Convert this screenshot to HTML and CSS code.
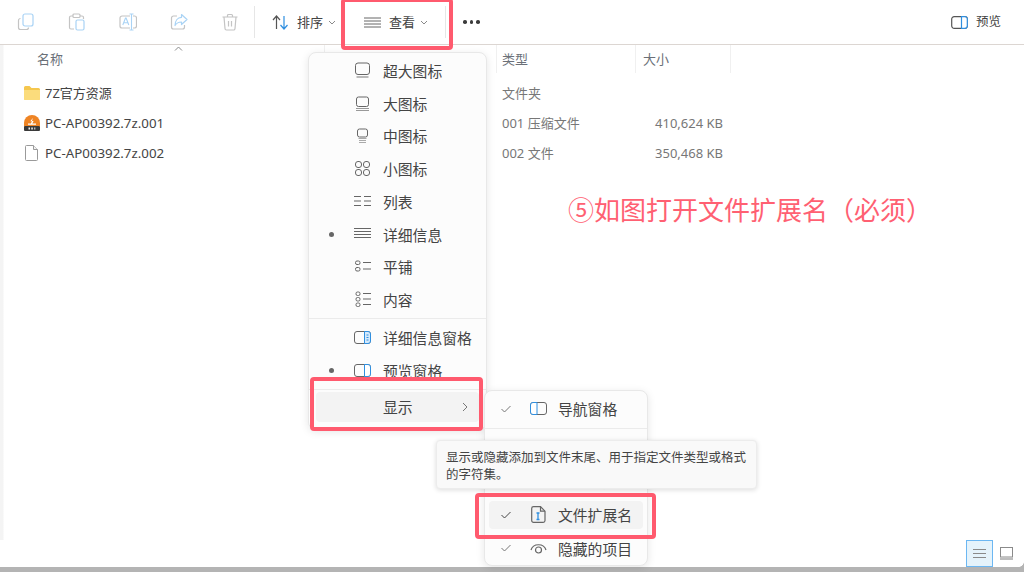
FILE: index.html
```html
<!DOCTYPE html>
<html lang="zh-CN">
<head>
<meta charset="utf-8">
<title>查看</title>
<link rel="stylesheet" href="styles.css">
</head>
<body>
<div class="window">
  <header class="toolbar">
    <div class="tool-group disabled">
      <svg class="tool" viewBox="0 0 18 18"><path d="M3.500 5.500A2 2 0 0 0 1.500 7.500v7a2 2 0 0 0 2 2h6a2 2 0 0 0 2-2" fill="none" stroke="#c4c4c4" stroke-width="1.200"/><rect x="6" y="1" width="10" height="12" rx="2" fill="#fff" stroke="#a9d3f5" stroke-width="1.200"/></svg>
      <svg class="tool" viewBox="0 0 18 18"><path d="M5 3H3a1.500 1.500 0 0 0-1.500 1.500v10A1.500 1.500 0 0 0 3 16h3M12 3h2a1.500 1.500 0 0 1 1.500 1.500V6" fill="none" stroke="#c4c4c4" stroke-width="1.200"/><rect x="5" y="1" width="7" height="3.500" rx="1" fill="#fff" stroke="#c4c4c4" stroke-width="1.200"/><rect x="8" y="7" width="8" height="10" rx="1.500" fill="#fff" stroke="#a9d3f5" stroke-width="1.200"/></svg>
      <svg class="tool" viewBox="0 0 18 18"><path d="M11 3H3a2 2 0 0 0-2 2v8a2 2 0 0 0 2 2h8M14 3h1.500a2 2 0 0 1 2 2v8a2 2 0 0 1-2 2H14" fill="none" stroke="#c4c4c4" stroke-width="1.200"/><path d="M3.800 12l2.700-7h.6l2.700 7M4.800 9.800h4" fill="none" stroke="#a9d3f5" stroke-width="1.100"/><path d="M12.500 1v16M10.500 1h4M10.500 17h4" fill="none" stroke="#a9d3f5" stroke-width="1.100"/></svg>
      <svg class="tool" viewBox="0 0 18 18"><path d="M7 3H3.500a2 2 0 0 0-2 2v9a2 2 0 0 0 2 2h9a2 2 0 0 0 2-2v-2" fill="none" stroke="#c4c4c4" stroke-width="1.200"/><path d="M11.500 1.500l5.500 5-5.500 5V9C8 9 6.500 10 5 12.500 5 8 7.500 4.500 11.500 4.300z" fill="#fff" stroke="#a9d3f5" stroke-width="1.200" stroke-linejoin="round"/></svg>
      <svg class="tool" viewBox="0 0 18 18"><path d="M1.500 4h15M6.500 4V2.500a1 1 0 0 1 1-1h3a1 1 0 0 1 1 1V4M3 4l1 11.500a1.500 1.500 0 0 0 1.500 1.500h7a1.500 1.500 0 0 0 1.500-1.500L15 4M7.500 8v5.500M10.500 8v5.500" fill="none" stroke="#c4c4c4" stroke-width="1.200"/></svg>
    </div>
    <span class="tool-sep"></span>
    <div class="tool-btn sort">
      <svg class="btn-icon" viewBox="0 0 17 15"><path d="M4.500 14V1.500M1 5l3.500-4L8 5" fill="none" stroke="#555" stroke-width="1.200"/><path d="M12 1v12.500M8.500 10l3.500 4 3.500-4" fill="none" stroke="#2f8fe0" stroke-width="1.200"/></svg>
      <span>排序</span>
      <svg class="chev" viewBox="0 0 8 5"><path d="M1 1l3 3 3-3" fill="none" stroke="#8a8a8a"/></svg>
    </div>
    <div class="tool-btn view">
      <svg class="btn-icon" viewBox="0 0 17 11"><path d="M0 1h17M0 4h17M0 7h17M0 10h17" fill="none" stroke="#666" stroke-width="1"/></svg>
      <span>查看</span>
      <svg class="chev" viewBox="0 0 8 5"><path d="M1 1l3 3 3-3" fill="none" stroke="#8a8a8a"/></svg>
    </div>
    <span class="tool-sep faint"></span>
    <div class="more"><i></i><i></i><i></i></div>
    <div class="tool-btn preview">
      <svg class="btn-icon" viewBox="0 0 17 13"><rect x=".7" y=".7" width="15.600" height="11.600" rx="2.500" fill="#fff" stroke="#555" stroke-width="1.200"/><path d="M10.500.7h3.300a2.500 2.500 0 0 1 2.500 2.500v6.600a2.500 2.500 0 0 1-2.500 2.500h-3.300z" fill="#fff" stroke="#2f8fe0" stroke-width="1.200"/></svg>
      <span>预览</span>
    </div>
  </header>

  <main class="files">
    <div class="file-grid head">
      <div class="col first">名称<svg class="caret" viewBox="0 0 9 5"><path d="M1 4.500l3.500-3.500L8 4.500" fill="none" stroke="#8a8a8a"/></svg></div>
      <div class="col"></div>
      <div class="col">类型</div>
      <div class="col">大小</div>
      <div></div>
    </div>
    <div class="file-grid row">
      <div class="name"><svg class="file-icon" viewBox="0 0 16 14"><path d="M0 1.500A1.500 1.500 0 0 1 1.500 0h4l2 2H14.500A1.500 1.500 0 0 1 16 3.500V12.500A1.500 1.500 0 0 1 14.500 14h-13A1.500 1.500 0 0 1 0 12.500z" fill="#f5c74e"/><path d="M0 4h16v8.500a1.500 1.500 0 0 1-1.500 1.500h-13A1.500 1.500 0 0 1 0 12.500z" fill="#fbdc7c"/></svg><span>7Z官方资源</span></div>
      <div></div><div class="type">文件夹</div><div></div><div></div>
    </div>
    <div class="file-grid row">
      <div class="name"><svg class="file-icon" viewBox="0 0 16 16"><path d="M0 11.500V8a8 8 0 0 1 16 0v3.500z" fill="#ef8424"/><path d="M8.800 3L6.300 6.300H8L6.800 8.500H4v1.200h8V8.500H8.300L9.600 6H8z" fill="#fff"/><rect y="11" width="16" height="5" rx="1" fill="#3a3a3a"/><path d="M4.500 12.500h1.500v2H4.500zM7.300 12.500h1.500v2H7.300zM10.300 12.500h1v2h-1z" fill="#eee"/></svg><span class="latin">PC-AP00392.7z.001</span></div>
      <div></div><div class="type">001 压缩文件</div><div class="size">410,624 KB</div><div></div>
    </div>
    <div class="file-grid row">
      <div class="name"><svg class="file-icon" viewBox="0 0 16 16"><path d="M2.500.5h7l4 4v10a1 1 0 0 1-1 1h-10a1 1 0 0 1-1-1v-13a1 1 0 0 1 1-1z" fill="#fff" stroke="#9a9a9a"/><path d="M9.500.5v4h4" fill="#f2f2f2" stroke="#9a9a9a"/></svg><span class="latin">PC-AP00392.7z.002</span></div>
      <div></div><div class="type">002 文件</div><div class="size">350,468 KB</div><div></div>
    </div>
  </main>

  <footer class="status">
    <div class="view-toggle on"><svg viewBox="0 0 13 9"><path d="M0 .5h13M0 4.500h13M0 8.500h13" stroke="#8a8a8a"/></svg></div>
    <div class="view-toggle"><svg viewBox="0 0 13 13"><rect x=".5" y=".5" width="12" height="9.500" fill="#fff" stroke="#8a8a8a"/><rect y="10.500" width="13" height="2.500" fill="#bdbdbd"/></svg></div>
  </footer>
  <div class="edge"></div>

  <p class="note">⑤如图打开文件扩展名（必须）</p>

  <nav class="menu main-menu">
    <div class="item"><span class="mark"></span><svg class="ico" viewBox="0 0 17 17"><rect x="1.500" y="1" width="14" height="11.500" rx="2.500" fill="none" stroke="#666"/><path d="M2.500 15h12" stroke="#777"/></svg><span>超大图标</span></div>
    <div class="item"><span class="mark"></span><svg class="ico" viewBox="0 0 17 17"><rect x="2.500" y="2" width="12" height="9.500" rx="2" fill="none" stroke="#666"/><path d="M2 13.500h13M2 15.500h13" stroke="#999"/></svg><span>大图标</span></div>
    <div class="item"><span class="mark"></span><svg class="ico" viewBox="0 0 17 17"><rect x="3.500" y="2" width="10" height="8" rx="2" fill="none" stroke="#666"/><path d="M4.500 11.500h8M5 13.500h7M5 15.500h7" stroke="#aaa"/></svg><span>中图标</span></div>
    <div class="item"><span class="mark"></span><svg class="ico" viewBox="0 0 17 17"><rect x="1.500" y="1.500" width="6" height="6" rx="2.500" fill="none" stroke="#666"/><rect x="9.500" y="1.500" width="6" height="6" rx="2.500" fill="none" stroke="#666"/><rect x="1.500" y="9.500" width="6" height="6" rx="2.500" fill="none" stroke="#666"/><rect x="9.500" y="9.500" width="6" height="6" rx="2.500" fill="none" stroke="#666"/></svg><span>小图标</span></div>
    <div class="item"><span class="mark"></span><svg class="ico" viewBox="0 0 17 17"><path d="M0 3.500h7M0 8h7M0 12.500h7M10 3.500h7M10 8h7M10 12.500h7" stroke="#666"/></svg><span>列表</span></div>
    <div class="item"><span class="mark dot"></span><svg class="ico" viewBox="0 0 17 17"><path d="M0 2.500h17M0 5.500h17M0 8.500h17M0 11.500h17" stroke="#666"/></svg><span>详细信息</span></div>
    <div class="item"><span class="mark"></span><svg class="ico" viewBox="0 0 17 17"><rect x="1.500" y="3" width="4.500" height="3.500" rx="1.500" fill="none" stroke="#666"/><rect x="1.500" y="9.500" width="4.500" height="3.500" rx="1.500" fill="none" stroke="#666"/><path d="M9 4.500h8M9 11h8" stroke="#666"/></svg><span>平铺</span></div>
    <div class="item"><span class="mark"></span><svg class="ico" viewBox="0 0 17 17"><rect x="2" y="1" width="4" height="3.500" rx="1.500" fill="none" stroke="#666"/><rect x="2" y="6.500" width="4" height="3.500" rx="1.500" fill="none" stroke="#666"/><rect x="2" y="12" width="4" height="3.500" rx="1.500" fill="none" stroke="#666"/><path d="M9 2.500h8M9 8h8M9 13.500h8" stroke="#666"/></svg><span>内容</span></div>
    <div class="sep"></div>
    <div class="item"><span class="mark"></span><svg class="ico" viewBox="0 0 17 17"><rect x=".5" y="2.500" width="16" height="12" rx="2.500" fill="none" stroke="#666"/><path d="M10.500 2.500h3.500a2.500 2.500 0 0 1 2.500 2.500v7a2.500 2.500 0 0 1-2.500 2.500h-3.500z" fill="#d4e9fb" stroke="#2f8fe0"/><path d="M12.500 6h2M12.500 8.500h2M12.500 11h2" stroke="#2f8fe0"/></svg><span>详细信息窗格</span></div>
    <div class="item"><span class="mark dot"></span><svg class="ico" viewBox="0 0 17 17"><rect x=".5" y="2.500" width="16" height="12" rx="2.500" fill="none" stroke="#666"/><path d="M10.500 2.500h3.500a2.500 2.500 0 0 1 2.500 2.500v7a2.500 2.500 0 0 1-2.500 2.500h-3.500z" fill="#fff" stroke="#2f8fe0"/></svg><span>预览窗格</span></div>
    <div class="sep"></div>
    <div class="item active"><span class="mark"></span><span class="ico"></span><span>显示</span><svg class="arrow" viewBox="0 0 6 10"><path d="M1 1l4 4-4 4" fill="none" stroke="#777"/></svg></div>
  </nav>

  <nav class="menu sub-menu">
    <div class="item"><svg class="mark check" viewBox="0 0 10 8"><path d="M.5 4l3 3 6-6" fill="none" stroke="#777"/></svg><svg class="ico" viewBox="0 0 17 17"><rect x=".5" y="2.500" width="16" height="12" rx="2.500" fill="none" stroke="#666"/><path d="M7 2.500H3A2.500 2.500 0 0 0 .5 5v7A2.500 2.500 0 0 0 3 14.500h4z" fill="#fff" stroke="#2f8fe0"/></svg><span>导航窗格</span></div>
    <div class="sep"></div>
    <div class="item"><span class="mark"></span><svg class="ico" viewBox="0 0 17 17"><path d="M8.500 1v15" stroke="#2f8fe0"/><path d="M1 5h5M1 9h5M11 5h5M11 9h5" stroke="#666"/></svg><span>紧凑视图</span></div>
    <div class="item"><span class="mark"></span><svg class="ico" viewBox="0 0 17 17"><rect x="2" y="2" width="13" height="13" rx="2" fill="#2f8fe0"/></svg><span>项目复选框</span></div>
    <div class="item picked"><svg class="mark check" viewBox="0 0 10 8"><path d="M.5 4l3 3 6-6" fill="none" stroke="#444"/></svg><svg class="ico" viewBox="0 0 17 17"><path d="M3.500 .7h7l4.500 4.500v9.300a1.800 1.800 0 0 1-1.800 1.800H3.500a1.800 1.800 0 0 1-1.800-1.800v-12A1.800 1.800 0 0 1 3.500 .7z" fill="none" stroke="#666" stroke-width="1.200"/><path d="M10.500 .7v4.500h4.500" fill="none" stroke="#666" stroke-width="1.200"/><path d="M6.500 7h3M8 7v6.500M6.500 13.500h3" fill="none" stroke="#2f8fe0" stroke-width="1.300"/></svg><span>文件扩展名</span></div>
    <div class="item"><svg class="mark check" viewBox="0 0 10 8"><path d="M.5 4l3 3 6-6" fill="none" stroke="#777"/></svg><svg class="ico" viewBox="0 0 17 17"><path d="M1 10c2-7 13-7 15 0" fill="none" stroke="#666" stroke-width="1.200"/><circle cx="8.500" cy="10" r="3" fill="none" stroke="#666" stroke-width="1.200"/></svg><span>隐藏的项目</span></div>
  </nav>

  <div class="tooltip">显示或隐藏添加到文件末尾、用于指定文件类型或格式的字符集。</div>

  <div class="mark-box box-view"></div>
  <div class="mark-box box-show"></div>
  <div class="mark-box box-ext"></div>
  <div class="corner"></div>
</div>
</body>
</html>
```

FILE: styles.css
```css
* { box-sizing: border-box; }
html, body { margin: 0; padding: 0; background: #fff; }
body {
  font-family: "Noto Sans", "Noto Sans CJK SC", sans-serif;
  color: #444;
  font-size: 14px;
  overflow: hidden;
}
.window {
  position: relative;
  width: 1024px;
  height: 572px;
  display: flex;
  flex-direction: column;
  overflow: hidden;
  background: #fff;
}

/* toolbar */
.toolbar {
  height: 45px;
  flex: none;
  display: flex;
  align-items: center;
  border-bottom: 1px solid #dcd6d2;
  padding-left: 17px;
}
.tool-group { display: flex; gap: 33px; width: 217px; }
.tool { width: 18px; height: 18px; flex: none; }
.tool-sep { width: 1px; height: 32px; background: #e6e6e6; flex: none; margin-right: 17px; margin-left: 20px; }
.tool-sep.faint { margin: 0 17px 0 17px; }
.tool-btn { display: flex; align-items: center; line-height: 20px; font-size: 13px; color: #444; }
.btn-icon { width: 17px; height: 15px; flex: none; margin-right: 8px; }
.chev { width: 8px; height: 5px; margin-left: 5px; flex: none; }
.sort { width: 76px; }
.view { margin-left: 16px; width: 64px; flex: none; }
.more { display: flex; gap: 3px; width: 18px; }
.more i { width: 3.500px; height: 3.500px; border-radius: 50%; background: #3c3c3c; flex: none; }
.preview { margin-left: auto; margin-right: 23px; }
.preview .btn-icon { height: 13px; }
.preview span { font-size: 12.500px; }

/* file list */
.files { flex: 1; background: linear-gradient(to right, #f4f4f4 0, #f4f4f4 3px, #fff 4px); }
.file-grid {
  display: grid;
  grid-template-columns: 325px 172px 139px 95px 1fr;
  align-items: center;
}
.head { height: 28px; margin-bottom: 5px; color: #6b7078; font-size: 13px; }
.col {
  height: 28px;
  line-height: 29px;
  padding-left: 6px;
  border-right: 1px solid #f0f0f0;
  margin-left: -1px;
}
.col:nth-child(3) { padding-left: 5px; margin-left: 0; }
.col:nth-child(4) { padding-left: 8px; }
.col.first { padding-left: 37px; margin-left: 0; position: relative; }
.caret { position: absolute; left: 174px; top: 1px; width: 9px; height: 5px; }
.row { height: 30px; font-size: 13px; line-height: 30px; }
.name { display: flex; align-items: center; padding-left: 24px; color: #444; white-space: nowrap; }
.latin { font-size: 13.300px; }
.file-icon { width: 16px; height: 16px; margin-right: 5px; flex: none; }
.type { color: #777; font-size: 13px; height: 30px; line-height: 31px; padding-left: 5px; white-space: nowrap; }
.size { color: #777; font-size: 13px; height: 30px; line-height: 31px; text-align: right; padding-right: 8px; white-space: nowrap; }

/* status */
.status {
  height: 27px;
  flex: none;
  display: flex;
  justify-content: flex-end;
  align-items: center;
  padding-right: 11px;
  gap: 6px;
}
.view-toggle { width: 14px; height: 14px; display: flex; align-items: center; justify-content: center; }
.view-toggle svg { width: 13px; height: 13px; }
.view-toggle.on { width: 27px; height: 27px; background: #e5f3fb; border: 1px solid #6cb7f2; }
.edge { height: 5px; flex: none; background: #b4b4b4; }

/* annotation */
.note {
  position: absolute;
  left: 568px;
  top: 190px;
  margin: 0;
  font-family: "Noto Sans CJK SC", sans-serif;
  font-size: 26px;
  line-height: 38px;
  color: #ff6072;
  white-space: nowrap;
}

/* menus */
.menu {
  position: absolute;
  background: #fcfcfc;
  border: 1px solid #e8e8e8;
  border-radius: 8px;
  box-shadow: 0 2px 8px rgba(0, 0, 0, .10);
  font-family: "Noto Sans CJK SC", sans-serif;
  font-size: 14.800px;
  color: #444;
}
.main-menu { left: 308px; top: 52px; width: 179px; height: 378px; padding-top: 1px; }
.main-menu .item { height: 32.750px; }
.sub-menu { left: 484px; top: 390px; width: 164px; height: 176px; padding-top: 1px; }
.sub-menu .item { height: 33.500px; margin: 0 4px; }
.item { display: flex; align-items: center; border-radius: 4px; white-space: nowrap; position: relative; }
.mark { width: 45px; flex: none; display: flex; justify-content: center; }
.mark.dot::before { content: ""; width: 5px; height: 5px; border-radius: 50%; background: #666; }
.ico { width: 17px; height: 17px; flex: none; margin-right: 12px; }
.sub-menu .ico { margin-right: 11px; }
.sep { height: 1px; background: #ebebeb; margin: 2px 0; }
.main-menu .active { margin: 2px 7px 0; height: 30px; background: #f3f3f3; }
.main-menu .active .mark { width: 38px; }
.arrow { width: 6px; height: 10px; margin-left: auto; margin-right: 11px; }
.sub-menu .mark { width: 41px; }
.sub-menu .check { width: 10px; height: 8px; margin: 0 19px 0 12px; }
.sub-menu .picked { background: #f3f3f3; height: 28px; margin-top: 3px; margin-bottom: 3px; }

.tooltip {
  position: absolute;
  left: 436px;
  top: 440px;
  width: 321px;
  height: 49px;
  padding: 7px 9px;
  background: #f9f9f9;
  border: 1px solid #ececec;
  border-radius: 4px;
  box-shadow: 0 1px 5px rgba(0, 0, 0, .14);
  font-family: "Noto Sans CJK SC", sans-serif;
  font-size: 12.500px;
  line-height: 17px;
  color: #444;
}

.mark-box {
  position: absolute;
  border: 4px solid #ff5a6e;
  border-radius: 4px;
}
.box-view { left: 341px; top: -2px; width: 112px; height: 52px; }
.box-show { left: 310px; top: 377px; width: 173px; height: 54px; }
.box-ext { left: 475px; top: 493px; width: 181px; height: 46px; }

.corner {
  position: absolute;
  right: 0;
  bottom: 5px;
  width: 5px;
  height: 5px;
  background: radial-gradient(circle at 0 0, #fff 4.500px, #b4b4b4 5px);
}
```
